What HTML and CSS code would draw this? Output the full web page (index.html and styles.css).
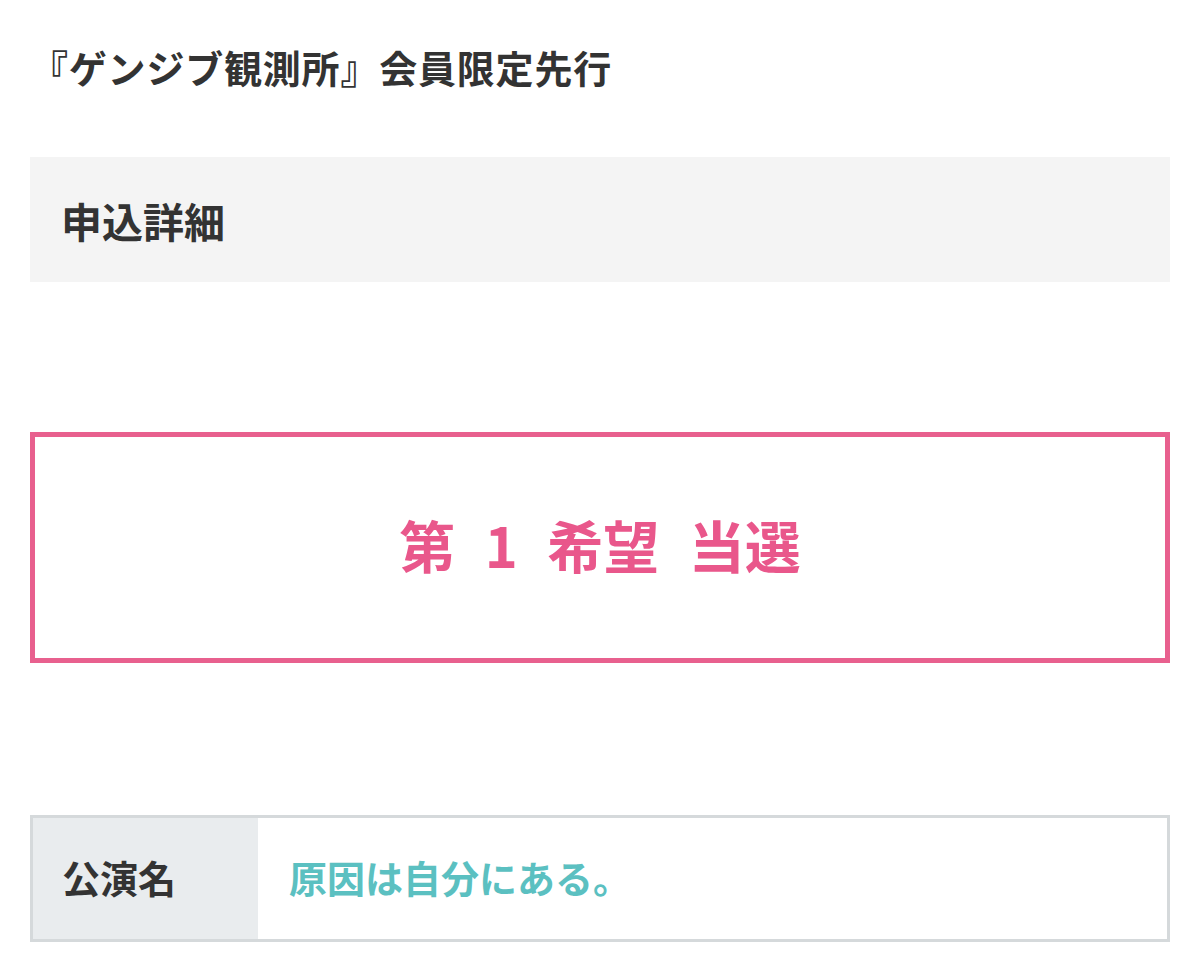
FILE: index.html
```html
<!DOCTYPE html>
<html lang="ja">
<head>
<meta charset="utf-8">
<title>申込詳細</title>
<link rel="stylesheet" href="styles.css">
</head>
<body>
<main class="page">
  <h1 class="title">『ゲンジブ観測所』会員限定先行</h1>
  <div class="section-head">申込詳細</div>
  <div class="result-box"><span class="result-text">第 1 希望 当選</span></div>
  <table class="info">
    <tr>
      <th class="info-label">公演名</th>
      <td class="info-value">原因は自分にある。</td>
    </tr>
  </table>
</main>
</body>
</html>
```

FILE: styles.css
```css
html, body {
  margin: 0;
  padding: 0;
  background: #ffffff;
}
body {
  font-family: "Noto Sans CJK JP", "Noto Sans", sans-serif;
  color: #333333;
}
.page {
  padding: 0 30px;
  display: flex;
  flex-direction: column;
}
.title {
  margin: 0;
  padding-top: 39px;
  font-size: 38px;
  line-height: 56px;
  font-weight: 700;
  color: #333333;
  letter-spacing: 0.8px;
}
.section-head {
  margin-top: 62px;
  height: 125px;
  background: #f4f4f4;
  display: flex;
  align-items: center;
  padding-left: 31px;
  font-size: 41px;
  font-weight: 700;
  color: #333333;
}
.result-box {
  margin-top: 150px;
  height: 231px;
  box-sizing: border-box;
  border: 5px solid #e8608e;
  display: flex;
  align-items: center;
  justify-content: center;
}
.result-text {
  font-size: 56px;
  font-weight: 700;
  color: #e9578b;
  word-spacing: 0.3em;
  padding-bottom: 8px;
}
.info {
  margin-top: 152px;
  border-collapse: collapse;
  width: 100%;
  height: 127px;
  border: 3px solid #d5d9db;
}
.info-label {
  width: 196px;
  background: #e9ecee;
  text-align: left;
  padding: 0 0 4px 29px;
  font-size: 38px;
  font-weight: 700;
  color: #333333;
}
.info-value {
  padding: 0 0 4px 31px;
  font-size: 38px;
  font-weight: 700;
  color: #5bc0c1;
  background: #ffffff;
}
```
